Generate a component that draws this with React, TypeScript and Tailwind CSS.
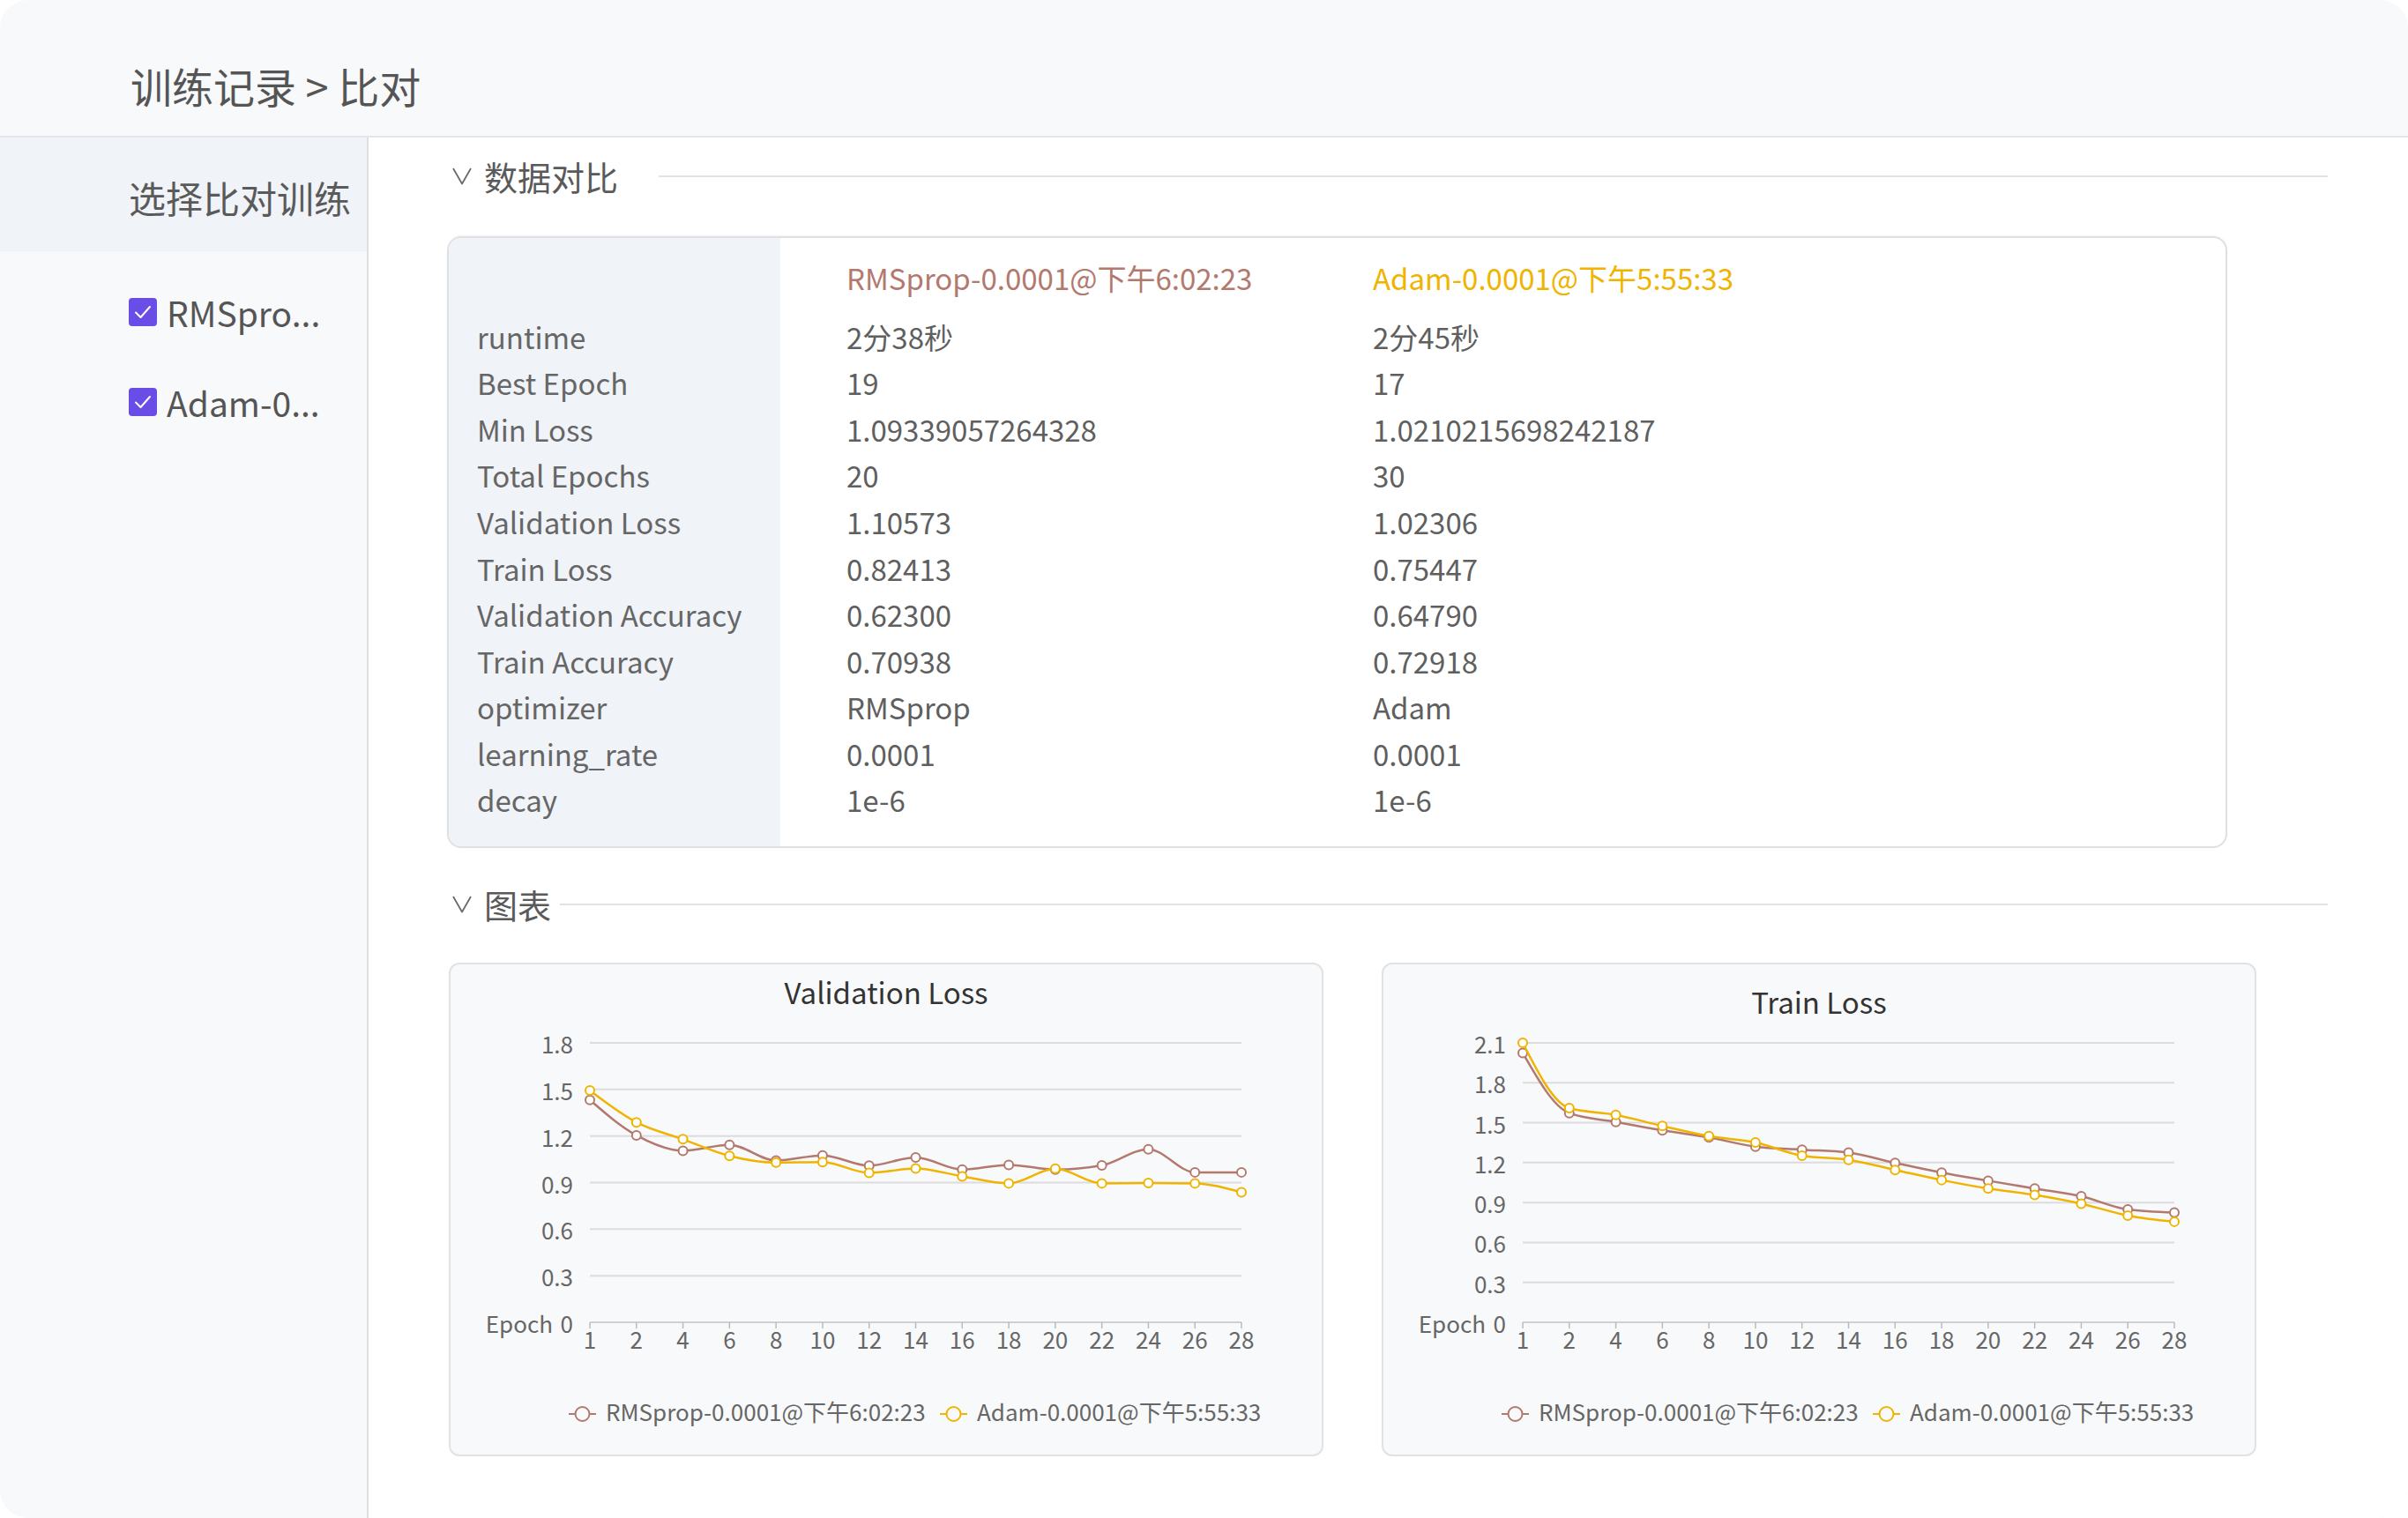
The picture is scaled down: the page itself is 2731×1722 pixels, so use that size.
import React from 'react';

const RMS_COLOR = '#b3796e';
const ADAM_COLOR = '#f0b400';

const RMS_LABEL = 'RMSprop-0.0001@下午6:02:23';
const ADAM_LABEL = 'Adam-0.0001@下午5:55:33';

const rows: [string, string, string][] = [
  ['runtime', '2分38秒', '2分45秒'],
  ['Best Epoch', '19', '17'],
  ['Min Loss', '1.09339057264328', '1.0210215698242187'],
  ['Total Epochs', '20', '30'],
  ['Validation Loss', '1.10573', '1.02306'],
  ['Train Loss', '0.82413', '0.75447'],
  ['Validation Accuracy', '0.62300', '0.64790'],
  ['Train Accuracy', '0.70938', '0.72918'],
  ['optimizer', 'RMSprop', 'Adam'],
  ['learning_rate', '0.0001', '0.0001'],
  ['decay', '1e-6', '1e-6'],
];

const epochs = ['1', '2', '4', '6', '8', '10', '12', '14', '16', '18', '20', '22', '24', '26', '28'];

const valLoss = {
  rms: [1.432, 1.204, 1.105, 1.143, 1.042, 1.075, 1.009, 1.062, 0.984, 1.014, 0.984, 1.011, 1.115, 0.966, 0.966],
  adam: [1.493, 1.288, 1.179, 1.072, 1.029, 1.032, 0.963, 0.991, 0.94, 0.895, 0.989, 0.895, 0.897, 0.895, 0.837],
};

const trainLoss = {
  rms: [2.024, 1.572, 1.506, 1.442, 1.389, 1.32, 1.297, 1.275, 1.198, 1.125, 1.064, 1.005, 0.947, 0.848, 0.825],
  adam: [2.1, 1.61, 1.559, 1.475, 1.399, 1.351, 1.252, 1.221, 1.145, 1.069, 1.005, 0.957, 0.891, 0.802, 0.756],
};

// monotone cubic, same idea as d3 curveMonotoneX
const monotonePath = (pts: [number, number][]) => {
  const n = pts.length;
  const sign = (v: number) => (v < 0 ? -1 : 1);
  const t: number[] = new Array(n).fill(0);
  for (let i = 1; i < n - 1; i++) {
    const h0 = pts[i][0] - pts[i - 1][0];
    const h1 = pts[i + 1][0] - pts[i][0];
    const s0 = (pts[i][1] - pts[i - 1][1]) / h0;
    const s1 = (pts[i + 1][1] - pts[i][1]) / h1;
    const p = (s0 * h1 + s1 * h0) / (h0 + h1);
    t[i] = (sign(s0) + sign(s1)) * Math.min(Math.abs(s0), Math.abs(s1), 0.5 * Math.abs(p)) || 0;
  }
  const sFirst = (pts[1][1] - pts[0][1]) / (pts[1][0] - pts[0][0]);
  const sLast = (pts[n - 1][1] - pts[n - 2][1]) / (pts[n - 1][0] - pts[n - 2][0]);
  t[0] = (3 * sFirst - t[1]) / 2;
  t[n - 1] = (3 * sLast - t[n - 2]) / 2;
  let d = `M${pts[0][0]},${pts[0][1]}`;
  for (let i = 0; i < n - 1; i++) {
    const [x0, y0] = pts[i];
    const [x1, y1] = pts[i + 1];
    const dx = (x1 - x0) / 3;
    d += ` C${x0 + dx},${y0 + dx * t[i]} ${x1 - dx},${y1 - dx * t[i + 1]} ${x1},${y1}`;
  }
  return d;
};

const Chevron = () => (
  <svg width="22" height="20" viewBox="0 0 22 20" fill="none">
    <polyline points="1,1 11,18.5 21,1" stroke="#6b6b6b" strokeWidth="1.8" strokeLinejoin="round" />
  </svg>
);

const SectionHeader: React.FC<{ title: string; gap: string }> = ({ title, gap }) => (
  <div className="flex h-[56px] items-center">
    <div className="ml-[6px]">
      <Chevron />
    </div>
    <span className="ml-[14px] text-[38px] leading-none text-[#5a5a5a]">{title}</span>
    <div className={`h-[2px] flex-1 bg-[#e2e2e2] ${gap}`} />
  </div>
);

const Checkbox = () => (
  <div className="flex h-[32px] w-[32px] items-center justify-center rounded-[4px] bg-[#6a4de6]">
    <svg width="22" height="22" viewBox="0 0 22 22" fill="none">
      <polyline points="3,11.5 8.5,17 19,5" stroke="#fff" strokeWidth="2" strokeLinecap="round" strokeLinejoin="round" />
    </svg>
  </div>
);

interface ChartProps {
  title: string;
  titleY: number;
  max: number;
  ticks: string[];
  rms: number[];
  adam: number[];
}

const LineChart: React.FC<ChartProps> = ({ title, titleY, max, ticks, rms, adam }) => {
  const left = 160;
  const right = 899;
  const top = 91;
  const bottom = 408;
  const step = (right - left) / (epochs.length - 1);
  const xOf = (i: number) => left + i * step;
  const yOf = (v: number) => bottom - (v / max) * (bottom - top);
  const series = [
    { data: rms, color: RMS_COLOR },
    { data: adam, color: ADAM_COLOR },
  ];

  return (
    <div className="h-[560px] w-[992px] rounded-[12px] border-2 border-[#e1e2e4] bg-[#f8f9fa]">
      <svg width="988" height="556" viewBox="2 2 988 556" className="block">
        <text x="496" y={titleY} textAnchor="middle" dominantBaseline="middle" fontSize="33" fill="#333">
          {title}
        </text>

        {ticks.map((label, k) => {
          const v = (max / (ticks.length - 1)) * k;
          const y = yOf(v);
          return (
            <g key={label}>
              <line x1={left} x2={right} y1={y} y2={y} stroke={k === 0 ? '#cfd0d2' : '#dcdcde'} strokeWidth="2" />
              <text x="141" y={y + 5} textAnchor="end" dominantBaseline="middle" fontSize="26" fill="#666">
                {label}
              </text>
            </g>
          );
        })}
        <text x="118" y={bottom + 5} textAnchor="end" dominantBaseline="middle" fontSize="26" fill="#666">
          Epoch
        </text>

        {epochs.map((e, i) => (
          <g key={e}>
            <line x1={xOf(i)} x2={xOf(i)} y1={bottom} y2={bottom + 7} stroke="#bbb" strokeWidth="1.5" />
            <text x={xOf(i)} y={bottom + 23} textAnchor="middle" dominantBaseline="middle" fontSize="26" fill="#666">
              {e}
            </text>
          </g>
        ))}

        {series.map((s) => (
          <g key={s.color}>
            <path
              d={monotonePath(s.data.map((v, i) => [xOf(i), yOf(v)] as [number, number]))}
              fill="none"
              stroke={s.color}
              strokeWidth="2.5"
            />
            {s.data.map((v, i) => (
              <circle key={i} cx={xOf(i)} cy={yOf(v)} r="5" fill="#fff" stroke={s.color} strokeWidth="2" />
            ))}
          </g>
        ))}

        {[
          { x: 136, color: RMS_COLOR, label: RMS_LABEL },
          { x: 557, color: ADAM_COLOR, label: ADAM_LABEL },
        ].map((l) => (
          <g key={l.label}>
            <line x1={l.x} x2={l.x + 31} y1="512" y2="512" stroke={l.color} strokeWidth="2" />
            <circle cx={l.x + 15.5} cy="512" r="8" fill="#f8f9fa" stroke={l.color} strokeWidth="2" />
            <text x={l.x + 42} y="513" dominantBaseline="middle" fontSize="26" fill="#666">
              {l.label}
            </text>
          </g>
        ))}
      </svg>
    </div>
  );
};

export default function App() {
  return (
    <div className="h-[1722px] w-[2731px] bg-white font-['Noto_Sans_CJK_SC','Noto_Sans',sans-serif]">
      <div className="flex h-full flex-col overflow-hidden rounded-[32px] bg-[#f8f9fb]">
        {/* breadcrumb */}
        <header className="flex h-[156px] shrink-0 items-center border-b-2 border-[#e4e5e8] pl-[148px] pt-[40px]">
          <h1 className="text-[47px] font-normal text-[#555]">训练记录 &gt; 比对</h1>
        </header>

        <div className="flex flex-1">
          {/* sidebar */}
          <aside className="w-[418px] shrink-0 border-r-2 border-[#dedfe1] bg-[#f8f9fb]">
            <div className="flex h-[129px] items-center bg-[#f0f3f8] pl-[146px] pt-[6px]">
              <span className="text-[42px] text-[#5a5a5a]">选择比对训练</span>
            </div>
            <div className="pt-[18px]">
              {['RMSpro...', 'Adam-0...'].map((name) => (
                <div key={name} className="flex h-[102px] items-center gap-[11px] pl-[146px]">
                  <Checkbox />
                  <span className="text-[39px] text-[#555]">{name}</span>
                </div>
              ))}
            </div>
          </aside>

          {/* main */}
          <main className="flex-1 bg-white pl-[89px] pr-[91px]">
            <div className="mt-[16px]">
              <SectionHeader title="数据对比" gap="ml-[46px]" />
            </div>

            <div className="mt-[40px] flex h-[694px] w-[2019px] overflow-hidden rounded-[16px] border-2 border-[#dfe0e2] shadow-[0_-1px_2px_rgba(0,0,0,0.05)]">
              <div className="w-[376px] shrink-0 bg-[#f0f3f8] pl-[32px] pt-[86px]">
                {rows.map(([label]) => (
                  <div key={label} className="flex h-[52.6px] items-center text-[33px] text-[#666]">
                    {label}
                  </div>
                ))}
              </div>
              <div className="flex pl-[75px] pt-[18px]">
                {[
                  { head: RMS_LABEL, color: 'text-[#b3796e]', idx: 1 },
                  { head: ADAM_LABEL, color: 'text-[#f0b400]', idx: 2 },
                ].map((col) => (
                  <div key={col.head} className="w-[597px]">
                    <div className={`mb-[12px] flex h-[56px] items-center text-[33px] ${col.color}`}>{col.head}</div>
                    {rows.map((r) => (
                      <div key={r[0]} className="flex h-[52.6px] items-center text-[33px] text-[#5f5f5f]">
                        {r[col.idx]}
                      </div>
                    ))}
                  </div>
                ))}
              </div>
            </div>

            <div className="mt-[36px]">
              <SectionHeader title="图表" gap="ml-[10px]" />
            </div>

            <div className="ml-[2px] mt-[38px] flex gap-[66px]">
              <LineChart
                title="Validation Loss"
                titleY={38}
                max={1.8}
                ticks={['0', '0.3', '0.6', '0.9', '1.2', '1.5', '1.8']}
                rms={valLoss.rms}
                adam={valLoss.adam}
              />
              <LineChart
                title="Train Loss"
                titleY={49}
                max={2.1}
                ticks={['0', '0.3', '0.6', '0.9', '1.2', '1.5', '1.8', '2.1']}
                rms={trainLoss.rms}
                adam={trainLoss.adam}
              />
            </div>
          </main>
        </div>
      </div>
    </div>
  );
}
